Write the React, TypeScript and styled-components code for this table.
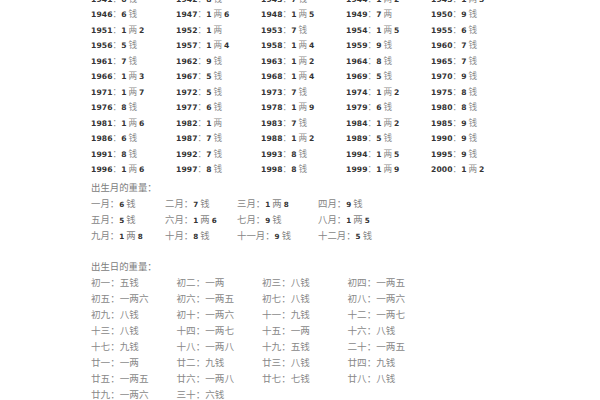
import React from 'react';
import styled, { createGlobalStyle } from 'styled-components';

const GlobalStyle = createGlobalStyle`
    html, body {
        margin: 0;
        padding: 0;
        background: #ffffff;
    }
    body {
        font-family: "Noto Sans CJK SC", "DejaVu Sans", sans-serif;
        overflow: hidden;
    }
`

/**
 * DATA
 */

const years: string[] = [
    '1941：6 钱', '1942：8 钱', '1943：7 钱', '1944：1 两 2', '1945：1 两 5',
    '1946：6 钱', '1947：1 两 6', '1948：1 两 5', '1949：7 两', '1950：9 钱',
    '1951：1 两 2', '1952：1 两', '1953：7 钱', '1954：1 两 5', '1955：6 钱',
    '1956：5 钱', '1957：1 两 4', '1958：1 两 4', '1959：9 钱', '1960：7 钱',
    '1961：7 钱', '1962：9 钱', '1963：1 两 2', '1964：8 钱', '1965：7 钱',
    '1966：1 两 3', '1967：5 钱', '1968：1 两 4', '1969：5 钱', '1970：9 钱',
    '1971：1 两 7', '1972：5 钱', '1973：7 钱', '1974：1 两 2', '1975：8 钱',
    '1976：8 钱', '1977：6 钱', '1978：1 两 9', '1979：6 钱', '1980：8 钱',
    '1981：1 两 6', '1982：1 两', '1983：7 钱', '1984：1 两 2', '1985：9 钱',
    '1986：6 钱', '1987：7 钱', '1988：1 两 2', '1989：5 钱', '1990：9 钱',
    '1991：8 钱', '1992：7 钱', '1993：8 钱', '1994：1 两 5', '1995：9 钱',
    '1996：1 两 6', '1997：8 钱', '1998：8 钱', '1999：1 两 9', '2000：1 两 2',
];

const months: string[] = [
    '一月：6 钱', '二月：7 钱', '三月：1 两 8', '四月：9 钱',
    '五月：5 钱', '六月：1 两 6', '七月：9 钱', '八月：1 两 5',
    '九月：1 两 8', '十月：8 钱', '十一月：9 钱', '十二月：5 钱',
];

const days: string[] = [
    '初一：五钱', '初二：一两', '初三：八钱', '初四：一两五',
    '初五：一两六', '初六：一两五', '初七：八钱', '初八：一两六',
    '初九：八钱', '初十：一两六', '十一：九钱', '十二：一两七',
    '十三：八钱', '十四：一两七', '十五：一两', '十六：八钱',
    '十七：九钱', '十八：一两八', '十九：五钱', '二十：一两五',
    '廿一：一两', '廿二：九钱', '廿三：八钱', '廿四：九钱',
    '廿五：一两五', '廿六：一两八', '廿七：七钱', '廿八：八钱',
    '廿九：一两六', '三十：六钱',
];

/**
 * TEXT PARTS
 */

const Num = styled('span')`
    font-family: "DejaVu Sans", "Liberation Sans", sans-serif;
    font-weight: bold;
    font-size: 7.6px;
    color: #333333;
    letter-spacing: 0.1px;
`

const Han = styled('span')`
    color: #8c8c8c;
`

function Weight({text}: {text: string}) {
    const parts = text.split(/(\d+)/).filter(p => p !== '');
    return (
        <>
            {parts.map((p, i) =>
                /^\d+$/.test(p) ? <Num key={i}>{p}</Num> : <Han key={i}>{p}</Han>
            )}
        </>
    )
}

/**
 * LAYOUT
 */

const Page = styled('div')`
    width: 600px;
    height: 400px;
    padding-left: 91px;
    box-sizing: border-box;
    overflow: hidden;
`

const YearGrid = styled('div')`
    display: grid;
    grid-template-columns: repeat(5, 85px);
    grid-auto-rows: 15.5px;
    margin-top: -9.25px;
    font-size: 8.6px;
    line-height: 15.5px;
`

const Heading = styled('div')<{$gap: number}>`
    margin-top: ${p => p.$gap}px;
    font-size: 9.4px;
    line-height: 16px;
    color: #7c7c7c;
`

const MonthGrid = styled('div')`
    display: grid;
    grid-template-columns: 74px 72px 81px 80px;
    grid-auto-rows: 16px;
    font-size: 9.4px;
    line-height: 16px;
    & ${Num} {
        font-size: 7.2px;
    }
    & ${Han} {
        color: #858585;
    }
`

const DayGrid = styled('div')`
    display: grid;
    grid-template-columns: repeat(4, 85.5px);
    grid-auto-rows: 16px;
    font-size: 9.6px;
    line-height: 16px;
    & ${Han} {
        color: #888888;
    }
`

const Cell = styled('div')`
    white-space: nowrap;
`

export default function App() {
    return (
        <>
            <GlobalStyle />
            <Page>
                <YearGrid>
                    {years.map(y => <Cell key={y}><Weight text={y} /></Cell>)}
                </YearGrid>
                <Heading $gap={2}>出生月的重量：</Heading>
                <MonthGrid>
                    {months.map(m => <Cell key={m}><Weight text={m} /></Cell>)}
                </MonthGrid>
                <Heading $gap={15}>出生日的重量：</Heading>
                <DayGrid>
                    {days.map(d => <Cell key={d}><Weight text={d} /></Cell>)}
                </DayGrid>
            </Page>
        </>
    )
}
